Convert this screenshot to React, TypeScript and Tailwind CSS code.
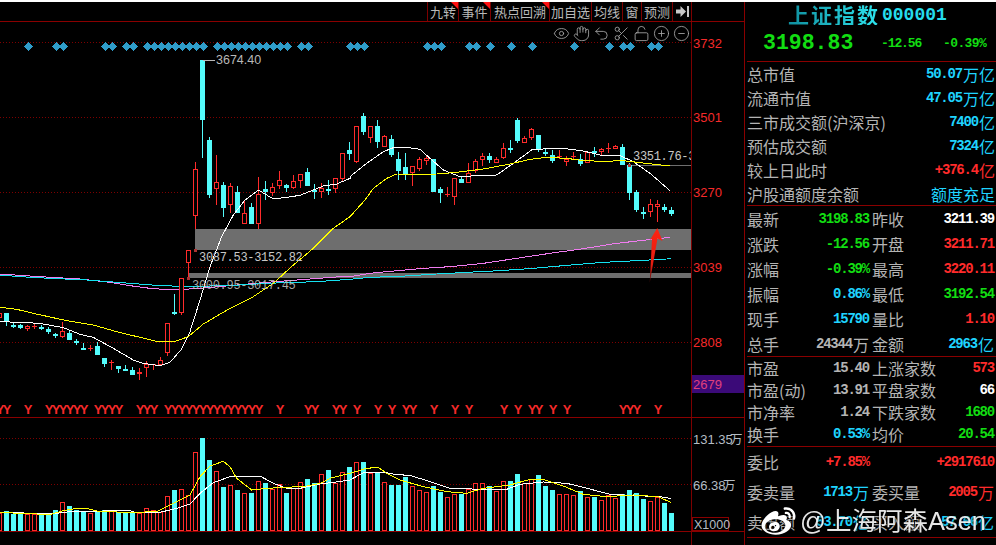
import { CircleMinus, CirclePlus, Eye, Hand, LockOpen, Scissors, Undo2 } from "lucide-react";
import { FaWeibo } from "react-icons/fa";

const mono = "font-['Liberation_Mono',monospace]";
const cjk = "font-['Noto_Sans_CJK_SC','Noto_Sans',sans-serif]";

const RED = "#ff2b2b";
const CYAN = "#54fcfc";
const GRID = "#7d0000";

// [colour, high, bodyTop, bodyBottom, low] in page pixels, one entry per 7px slot starting at k=-1
type Candle = [string, number, number, number, number];
const candles: Candle[] = [
  ["r", 313, 313, 318, 318],
  ["c", 313, 313, 321, 326],
  ["c", 322.7, 324.7, 325.7, 328],
  ["c", 324, 324.7, 328, 329],
  ["r", 325, 326, 328.7, 330.7],
  ["r", 323.7, 326, 326, 329],
  ["c", 325, 327.3, 327.3, 329.7],
  ["c", 327, 329, 332.3, 334],
  ["c", 332.7, 334.3, 335.7, 338.3],
  ["r", 322.3, 330.7, 337, 338],
  ["c", 331, 333, 339.7, 339.7],
  ["c", 339, 341, 343, 345],
  ["c", 343, 348, 348, 350],
  ["r", 345, 347.7, 347.7, 351],
  ["c", 342, 346, 355, 355],
  ["c", 358, 358, 363.7, 366.7],
  ["r", 360, 362, 362, 370],
  ["c", 366, 366, 369, 372.7],
  ["c", 365, 369.3, 370.7, 370.7],
  ["c", 367.3, 370, 375, 375],
  ["r", 368.3, 371.7, 374, 380],
  ["r", 361.3, 363.7, 368.3, 376.7],
  ["r", 364, 364, 364, 370],
  ["r", 357.3, 360.3, 365.3, 365.3],
  ["r", 323.3, 323.3, 352.7, 356],
  ["c", 294, 311.7, 311.7, 315],
  ["r", 278.3, 278.3, 312.7, 314.7],
  ["r", 250.3, 250.3, 262.7, 278],
  ["r", 162.3, 169.3, 215.7, 228.7],
  ["c", 60, 60, 119.7, 157.7],
  ["c", 137, 140, 195, 198],
  ["r", 155, 181.7, 188.7, 205],
  ["c", 182, 185, 208.3, 217.3],
  ["r", 183, 186.3, 205, 212.7],
  ["c", 186, 192, 212.7, 212.7],
  ["r", 200, 213.3, 224, 224],
  ["c", 203, 206.7, 224, 224],
  ["r", 177.3, 194.3, 224.3, 229.3],
  ["c", 181, 189.3, 192, 200],
  ["r", 183, 186.7, 193, 196],
  ["r", 171, 180.3, 186, 189],
  ["c", 184, 185.3, 188, 192],
  ["r", 175, 181.3, 188, 189],
  ["r", 174.3, 174.3, 180.7, 188],
  ["c", 168, 172, 185.7, 185.7],
  ["c", 184, 190, 190, 199],
  ["r", 183, 188.3, 192, 198],
  ["c", 180, 189, 189, 195],
  ["r", 178.3, 178.3, 189, 193],
  ["r", 153.3, 153.3, 179, 181],
  ["c", 142, 150, 154, 160],
  ["r", 126, 126, 161.7, 163],
  ["c", 113, 116, 132, 135],
  ["r", 126, 126, 137.7, 143],
  ["c", 120, 126, 141.7, 148],
  ["r", 135, 136, 146.7, 146.7],
  ["c", 135, 139, 155, 157],
  ["c", 152, 159, 170.7, 180],
  ["c", 153, 167, 174, 180],
  ["r", 166, 166, 172.7, 186],
  ["r", 157, 159, 169, 171],
  ["r", 156, 158, 161.3, 165],
  ["c", 159, 159, 191.7, 191.7],
  ["c", 187, 189, 192.7, 203],
  ["r", 186.7, 194, 194, 197],
  ["r", 178.3, 178.3, 196.7, 205],
  ["c", 175.7, 179, 183, 183],
  ["r", 163.3, 173.3, 182.7, 182.7],
  ["r", 158.7, 161, 171, 173.3],
  ["r", 153.3, 156, 160, 165.7],
  ["c", 153.3, 156, 160, 163.3],
  ["r", 156.7, 159.3, 163.3, 163.3],
  ["r", 143.3, 148.3, 157.7, 159.3],
  ["c", 140, 148.3, 148.3, 152.7],
  ["c", 118, 120, 140.7, 142.7],
  ["r", 136, 138.3, 143.3, 143.3],
  ["r", 128.3, 129.3, 137.7, 140],
  ["c", 135, 135, 150, 151.7],
  ["c", 149, 152.3, 152.3, 156],
  ["c", 150, 155, 160.7, 162.7],
  ["r", 150, 155.7, 157.3, 159.3],
  ["r", 156, 159.3, 162.3, 165.7],
  ["r", 152, 156, 156, 159],
  ["c", 154, 159.3, 164.3, 165.7],
  ["r", 151.7, 152, 163.3, 163.3],
  ["c", 146.7, 150.7, 150.7, 156.7],
  ["r", 147.7, 149.3, 152, 155.7],
  ["r", 143.3, 148.3, 148.3, 152.7],
  ["r", 145, 146, 149.3, 149.3],
  ["c", 144, 147, 165, 165],
  ["c", 163.3, 165, 192.7, 200],
  ["c", 190, 192, 210, 212],
  ["c", 206.7, 211.7, 211.7, 219],
  ["r", 199, 204.3, 212.3, 216.7],
  ["r", 200, 204.3, 207.3, 221.7],
  ["c", 204, 206.7, 210, 212.3],
  ["c", 207.3, 210, 214, 215.7],
];

// [colour, bar top in zoomed units] for the same slots
const volumes: [string, number][] = [
  ["r", 340], ["c", 334], ["c", 342], ["c", 340], ["r", 343], ["r", 343], ["c", 345], ["c", 345], ["c", 330], ["r", 307],
  ["c", 318], ["c", 330], ["c", 335], ["r", 340], ["c", 333], ["c", 330], ["r", 333], ["c", 335], ["c", 337], ["c", 335],
  ["r", 338], ["r", 325], ["r", 331], ["r", 336], ["r", 289], ["c", 270], ["r", 268], ["r", 285], ["r", 157], ["c", 114],
  ["c", 180], ["r", 214], ["c", 261], ["r", 256], ["c", 270], ["r", 280], ["c", 279], ["r", 244], ["c", 249], ["r", 266],
  ["r", 253], ["c", 279], ["r", 264], ["r", 247], ["c", 237], ["c", 249], ["r", 223], ["c", 210], ["r", 250], ["r", 217],
  ["c", 201], ["r", 186], ["c", 186], ["r", 218], ["c", 218], ["r", 246], ["c", 255], ["c", 255], ["c", 231], ["r", 259],
  ["r", 270], ["r", 277], ["c", 257], ["c", 275], ["r", 291], ["r", 282], ["c", 282], ["r", 268], ["r", 250], ["r", 250],
  ["c", 258], ["r", 273], ["r", 244], ["c", 243], ["c", 222], ["r", 250], ["r", 238], ["c", 225], ["c", 258], ["c", 270],
  ["r", 282], ["r", 282], ["r", 285], ["c", 273], ["r", 291], ["c", 291], ["r", 300], ["r", 285], ["r", 294], ["c", 283],
  ["c", 270], ["c", 280], ["c", 297], ["r", 304], ["r", 291], ["c", 309], ["c", 339],
];

const diamondSlots = [
  3, 7, 8, 14, 15, 17, 18, 20, 21, 22, 23, 24, 25, 26, 27, 28, 30, 31, 32, 33, 34, 35, 36, 37, 38, 39, 40, 42, 43, 49, 50,
  51, 60, 61, 62, 66, 67, 69, 72, 75, 81, 86, 88, 89, 92, 93,
];
const ySlots = [
  -1, 0, 3, 6, 7, 8, 9, 10, 11, 13, 14, 15, 16, 19, 20, 21, 23, 24, 25, 26, 27, 28, 29, 30, 31, 32, 33, 34, 35, 36, 39, 43,
  44, 47, 48, 50, 53, 55, 57, 58, 61, 64, 66, 71, 73, 75, 76, 78, 80, 88, 89, 90, 93,
];

const slotX = (k: number) => 7 * k + 6.5;

// converts [x, y] pairs measured in a 3x crop back to page pixels
const crop = (ox: number, oy: number, pts: number[][]) =>
  pts.map(([x, y]) => `${ox + x / 3},${oy + y / 3}`).join(" ");

const whiteMain = [
  crop(0, 200, [[0, 365], [90, 368], [130, 372], [190, 383], [240, 403], [280, 412], [340, 445], [400, 480], [430, 490], [480, 497], [510, 487], [545, 447], [570, 395], [600, 300], [630, 200], [665, 110], [700, 45], [735, 0]]),
  crop(0, 0, [[740, 597], [775, 570], [820, 597], [860, 592], [900, 586], [940, 570], [970, 558], [1010, 552], [1050, 535]]),
  crop(350, 0, [[0, 530], [50, 490], [100, 455], [130, 443], [175, 443], [210, 448], [240, 475], [280, 510], [330, 530], [380, 527], [440, 525], [490, 490], [545, 450], [580, 447], [640, 445], [700, 453], [750, 465], [810, 467], [850, 485], [900, 520], [960, 572]]),
].join(" ");
const yellowMain = [
  crop(0, 200, [[0, 322], [50, 328], [100, 340], [200, 362], [280, 375], [350, 395], [420, 412], [470, 424], [525, 424], [565, 410], [610, 372], [690, 325], [760, 290], [820, 250], [880, 195], [940, 145], [1000, 85], [1050, 50]]),
  crop(350, 0, [[45, 600], [70, 565], [110, 535], [140, 522], [200, 523], [260, 522], [320, 517], [400, 507], [480, 492], [540, 478], [590, 472], [650, 475], [700, 482], [760, 484], [820, 482], [870, 488], [960, 498]]),
].join(" ");
const magentaMain = [
  crop(0, 200, [[0, 222], [60, 226], [120, 230], [240, 237], [330, 247], [390, 257], [450, 265], [520, 270], [600, 265], [700, 256], [800, 247], [890, 240], [1020, 230], [1050, 230]]),
  crop(350, 200, [[60, 220], [120, 214], [220, 205], [300, 200], [400, 190], [500, 175], [600, 160], [700, 146], [800, 130], [880, 121], [960, 112]]),
].join(" ");
const cyanMain = [
  crop(0, 200, [[0, 225], [60, 230], [150, 235], [260, 240], [390, 250], [470, 256], [560, 260], [700, 256], [800, 250], [950, 245], [1050, 238]]),
  crop(350, 200, [[60, 232], [150, 229], [260, 222], [350, 217], [450, 212], [550, 205], [640, 197], [760, 187], [880, 181], [950, 177], [964, 175]]),
].join(" ");
const whiteVol = [
  crop(0, 400, [[0, 337], [70, 338], [72, 341], [160, 341], [210, 335], [300, 334], [330, 331], [385, 331], [410, 338], [480, 337], [530, 325], [570, 312], [600, 280], [640, 248], [690, 230], [765, 229], [780, 228], [820, 250], [860, 265], [900, 265], [960, 252], [1000, 247], [1050, 240]]),
  crop(350, 400, [[40, 218], [110, 218], [140, 224], [180, 226], [240, 245], [300, 265], [400, 268], [470, 268], [510, 253], [580, 246], [650, 250], [700, 262], [780, 283], [860, 287], [930, 290], [964, 296]]),
].join(" ");
const yellowVol = [
  crop(0, 400, [[0, 337], [60, 340], [110, 342], [155, 342], [190, 332], [230, 325], [260, 325], [300, 335], [400, 337], [470, 335], [530, 305], [570, 285], [600, 230], [630, 198], [670, 184], [690, 200], [710, 235], [755, 270], [800, 265], [860, 262], [920, 258], [960, 250], [990, 235], [1050, 220]]),
  crop(350, 400, [[50, 205], [85, 202], [110, 220], [150, 240], [220, 260], [290, 275], [350, 280], [400, 265], [480, 255], [540, 238], [580, 238], [640, 258], [700, 283], [770, 290], [850, 285], [925, 290], [964, 308]]),
].join(" ");

function CandleMark({ c, k }: { c: Candle; k: number }) {
  const [col, hi, top, bot, lo] = c;
  const x = slotX(k);
  const stroke = col === "r" ? RED : CYAN;
  const t = Math.round(top);
  const b = Math.round(bot);
  return (
    <g>
      <line x1={x} x2={x} y1={hi} y2={t} stroke={stroke} />
      <line x1={x} x2={x} y1={b} y2={lo} stroke={stroke} />
      {b - t < 2 ? (
        <rect x={x - 2.5} y={t} width={5} height={col === "r" ? 1 : Math.max(b - t, 1) + 1} fill={stroke} />
      ) : col === "r" ? (
        <rect x={x - 2} y={t + 0.5} width={4} height={b - t - 1} fill="#000" stroke={stroke} />
      ) : (
        <rect x={x - 2.5} y={t} width={5} height={b - t} fill={stroke} />
      )}
    </g>
  );
}

function MainChart() {
  return (
    <svg width={744} height={396} viewBox="0 22 744 396" className="block" shapeRendering="crispEdges">
      {[42.5, 117.5, 192.5, 267.5, 342.5].map((y) => (
        <line key={y} x1={0} x2={691} y1={y} y2={y} stroke={GRID} strokeDasharray="1 2" />
      ))}
      <rect x={195} y={229} width={496} height={21} fill="#6e6e6e" />
      <rect x={188} y={273} width={503} height={5} fill="#6e6e6e" />
      <line x1={630} x2={691} y1={165.5} y2={165.5} stroke="#6e6e6e" />

      {diamondSlots.map((k) => (
        <polygon
          key={k}
          points={`${7 * k + 7.5},42 ${7 * k + 12},46.5 ${7 * k + 7.5},51 ${7 * k + 3},46.5`}
          fill="#2f9cc9"
        />
      ))}

      <polyline points={magentaMain} fill="none" stroke="#f07cf0" />
      <polyline points={cyanMain} fill="none" stroke="#14e0ef" />

      {candles.map((c, i) => (
        <CandleMark key={i} c={c} k={i - 1} />
      ))}

      <polyline points={whiteMain} fill="none" stroke="#fff" />
      <polyline points={yellowMain} fill="none" stroke="#ffff00" />

      <rect x={194} y={249} width={3} height={3} fill="#a33" />
      <rect x={187} y={277} width={3} height={3} fill="#a33" />
      <rect x={628} y={164} width={3} height={3} fill="#a33" />

      <g fontFamily="'Liberation Mono', monospace" fontSize={12} letterSpacing={-0.3} fill="#c8c8c8">
        <text x={199} y={261}>3087.53-3152.82</text>
        <text x={192} y={289} fillOpacity={0.85}>3000.95-3017.45</text>
        <svg x={0} y={0} width={691} height={417} overflow="hidden">
          <text x={633} y={160}>3351.76-3</text>
        </svg>
      </g>
      <text x={216} y={64} fontFamily="'Liberation Sans', sans-serif" fontSize={12.5} fill="#b8b8b8">3674.40</text>
      <line x1={203} x2={215} y1={60.5} y2={60.5} stroke="#b8b8b8" />

      <g fontFamily="'Liberation Sans', sans-serif" fontSize={13} fontWeight={700} fill="#f52a2a" textAnchor="middle">
        {ySlots.map((k) => (
          <text key={k} x={slotX(k) + 0.5} y={413.5}>Y</text>
        ))}
      </g>

      <defs>
        <linearGradient id="arrowFade" x1="0" y1="0" x2="0" y2="1">
          <stop offset="0" stopColor="#ff2412" />
          <stop offset="0.7" stopColor="#e01c10" />
          <stop offset="1" stopColor="#4a0808" />
        </linearGradient>
      </defs>
      <polygon
        points="657.3,228 662.5,241 657.5,238.5 649.7,283 652,239 650,240"
        fill="url(#arrowFade)"
        shapeRendering="auto"
      />

      <rect x={692} y={375} width={52} height={18} fill="#3b0a78" />
      <g fontFamily="'Liberation Sans', sans-serif" fontSize={13} fill="#f52a2a">
        <text x={693} y={48}>3732</text>
        <text x={693} y={122}>3501</text>
        <text x={693} y={197}>3270</text>
        <text x={693} y={272}>3039</text>
        <text x={693} y={347}>2808</text>
      </g>
      <text x={693} y={388.5} fontFamily="'Liberation Sans', sans-serif" fontSize={13} fill="#e0407c">2679</text>
      <line x1={691.5} x2={691.5} y1={22} y2={418} stroke={GRID} />
      <line x1={0} x2={744} y1={417.5} y2={417.5} stroke="#8a0000" />
    </svg>
  );
}

function VolumeChart() {
  return (
    <svg width={744} height={127} viewBox="0 418 744 127" className="block" shapeRendering="crispEdges">
      {[438.5, 484.5].map((y) => (
        <line key={y} x1={0} x2={691} y1={y} y2={y} stroke={GRID} strokeDasharray="1 2" />
      ))}
      {volumes.map(([col, top], i) => {
        const x = slotX(i - 1);
        const y = Math.round(400 + top / 3);
        return col === "r" ? (
          <rect key={i} x={x - 2} y={y + 0.5} width={4} height={531 - y - 1} fill="#000" stroke={RED} />
        ) : (
          <rect key={i} x={x - 2.5} y={y} width={5} height={531 - y} fill={CYAN} />
        );
      })}
      <polyline points={whiteVol} fill="none" stroke="#fff" />
      <polyline points={yellowVol} fill="none" stroke="#ffff00" />
      <line x1={0} x2={744} y1={531.5} y2={531.5} stroke="#8a0000" />
      <line x1={691.5} x2={691.5} y1={418} y2={545} stroke={GRID} />
      <rect x={692.5} y={517.5} width={36} height={13} fill="#000" stroke="#8a0000" />
      <g fontFamily="'Liberation Sans', sans-serif" fontSize={13} fill="#b4bcc4">
        <text x={693} y={444}>131.35</text>
        <text x={693} y={490}>66.38</text>
        <text x={694} y={528.5} fontSize={12.5}>X1000</text>
      </g>
      <g fontFamily="'Noto Sans CJK SC', sans-serif" fontSize={12.5} fill="#b4bcc4">
        <text x={730} y={444}>万</text>
        <text x={723} y={490}>万</text>
      </g>
    </svg>
  );
}

type ToolItem = { label: string; w: string; flag?: boolean };
const tools: ToolItem[] = [
  { label: "九转", w: "w-[31px]", flag: true },
  { label: "事件", w: "w-[32px]", flag: true },
  { label: "热点回溯", w: "w-[59px]", flag: true },
  { label: "加自选", w: "w-[42px]" },
  { label: "均线", w: "w-[31px]" },
  { label: "窗", w: "w-[19px]" },
  { label: "预测", w: "w-[31px]" },
];

function Toolbar() {
  return (
    <div className={`flex h-[20px] justify-end border-b border-[#8a0000] pr-[52px] ${cjk}`}>
      {tools.map((t) => (
        <div
          key={t.label}
          className={`relative flex items-center justify-center border-l border-[#7d0000] text-[13px] leading-none text-[#b9b9b9] ${t.w}`}
        >
          {t.label}
          {t.flag && (
            <span className="absolute top-0 right-0 h-0 w-0 border-t-[7px] border-l-[7px] border-t-[#ff1010] border-l-transparent" />
          )}
        </div>
      ))}
      <div className="flex w-[20px] items-center justify-center border-x border-[#7d0000]">
        <svg width={13} height={11} viewBox="0 0 13 11">
          <path d="M0 3.5h4.5V0L10 5.5 4.5 11V7.5H0z" fill="#c8c8c8" />
          <rect x={11} y={0} width={2} height={11} fill="#c8c8c8" />
        </svg>
      </div>
    </div>
  );
}

function ChartTools() {
  const cls = "h-[17px] w-[17px] text-[#a8a8a8]";
  return (
    <div className="absolute top-[3px] right-[54px] flex gap-[3px]">
      <Eye className={cls} strokeWidth={1.2} />
      <Hand className={cls} strokeWidth={1.2} />
      <Undo2 className={cls} strokeWidth={1.2} />
      <Scissors className={cls} strokeWidth={1.2} />
      <LockOpen className={cls} strokeWidth={1.2} />
      <CirclePlus className={cls} strokeWidth={1.2} />
      <CircleMinus className={cls} strokeWidth={1.2} />
    </div>
  );
}

const colors: Record<string, string> = {
  c: "text-[#1fd4ff]",
  r: "text-[#ff2b2b]",
  g: "text-[#12dd12]",
  w: "text-white",
  s: "text-[#b4b4b4]",
};

function Value({ v, unit, c }: { v: string; unit?: string; c: string }) {
  return (
    <span className={`flex items-center whitespace-nowrap ${colors[c]}`}>
      <span className={`text-[14px] font-bold tracking-[-1.2px] ${mono}`}>{v}</span>
      {unit && <span className={`ml-[1px] text-[16px] leading-none ${cjk}`}>{unit}</span>}
    </span>
  );
}

const totals: [string, string, string, string][] = [
  ["总市值", "50.07", "万亿", "c"],
  ["流通市值", "47.05", "万亿", "c"],
  ["三市成交额(沪深京)", "7400", "亿", "c"],
  ["预估成交额", "7324", "亿", "c"],
  ["较上日此时", "+376.4", "亿", "r"],
];

type Cell = [string, string, string, string?];
// label, value, colour, optional unit for both columns of the quote grid
const quotes: [Cell, Cell][] = [
  [["最新", "3198.83", "g"], ["昨收", "3211.39", "w"]],
  [["涨跌", "-12.56", "g"], ["开盘", "3211.71", "r"]],
  [["涨幅", "-0.39%", "g"], ["最高", "3220.11", "r"]],
  [["振幅", "0.86%", "c"], ["最低", "3192.54", "g"]],
  [["现手", "15790", "c"], ["量比", "1.10", "r"]],
  [["总手", "24344", "s", "万"], ["金额", "2963", "c", "亿"]],
];
const ratios: [Cell, Cell][] = [
  [["市盈", "15.40", "s"], ["上涨家数", "573", "r"]],
  [["市盈(动)", "13.91", "s"], ["平盘家数", "66", "w"]],
  [["市净率", "1.24", "s"], ["下跌家数", "1680", "g"]],
  [["换手", "0.53%", "c"], ["均价", "20.54", "g"]],
];
const orders: [Cell, Cell][] = [
  [["委比", "+7.85%", "r"], ["", "+2917610", "r"]],
  [["委卖量", "1713", "c", "万"], ["委买量", "2005", "r", "万"]],
  [["卖出额", "53.70", "c", "亿"], ["买入额", "57.66", "c", "亿"]],
];

function PairRow({ row, h }: { row: [Cell, Cell]; h: string }) {
  const [a, b] = row;
  return (
    <div className={`grid grid-cols-[125px_122px] items-center text-[16px] leading-none text-[#b4b4b4] ${h} ${cjk}`}>
      <div className="flex items-center justify-between pr-[3px]">
        <span className="whitespace-nowrap">{a[0]}</span>
        <Value v={a[1]} c={a[2]} unit={a[3]} />
      </div>
      <div className="flex items-center justify-between">
        <span className="whitespace-nowrap">{b[0]}</span>
        <Value v={b[1]} c={b[2]} unit={b[3]} />
      </div>
    </div>
  );
}

function Sidebar() {
  return (
    <aside className="relative w-[252px] border-l border-[#8a0000] pl-[2px]">
      <div className="h-[60px] border-b border-[#8a0000]">
        <div className="flex h-[25px] items-center pl-[41px] font-bold">
          <span className={`bg-gradient-to-r from-[#0f8f9f] to-[#2ee6f0] bg-clip-text text-[21px] leading-none tracking-[2px] text-transparent ${cjk}`}>
            上证指数
          </span>
          <span className={`ml-[2px] text-[18px] leading-none text-[#25dcec] ${mono}`}>000001</span>
        </div>
        <div className={`flex h-[33px] items-center font-bold text-[#12dd12] ${mono}`}>
          <span className="ml-[16px] w-[118px] text-[21.5px] leading-none">3198.83</span>
          <span className="w-[62px] text-[13px] leading-none tracking-[-1.1px]">-12.56</span>
          <span className="text-[13px] leading-none tracking-[-0.6px]">-0.39%</span>
        </div>
      </div>

      <div className="h-[144px] border-b border-[#8a0000] pr-[1px]">
        {totals.map(([l, v, u, c]) => (
          <div key={l} className={`flex h-[24px] items-center justify-between text-[16px] leading-none text-[#b4b4b4] ${cjk}`}>
            <span className="whitespace-nowrap">{l}</span>
            <Value v={v} unit={u} c={c} />
          </div>
        ))}
        <div className={`flex h-[23px] items-center justify-between text-[16px] leading-none ${cjk}`}>
          <span className="whitespace-nowrap text-[#b4b4b4]">沪股通额度余额</span>
          <span className="text-[#1fd4ff]">额度充足</span>
        </div>
      </div>

      <div className="h-[151px] border-b border-[#8a0000]">
        {quotes.map((r) => (
          <PairRow key={r[0][0]} row={r} h="h-[25px]" />
        ))}
      </div>
      <div className="h-[90px] border-b border-[#8a0000]">
        {ratios.map((r) => (
          <PairRow key={r[0][0]} row={r} h="h-[22px]" />
        ))}
      </div>
      <div className="h-[91px] border-b border-[#8a0000]">
        {orders.map((r) => (
          <PairRow key={r[0][0]} row={r} h="h-[30px]" />
        ))}
      </div>
    </aside>
  );
}

export default function App() {
  return (
    <div className="relative h-[545px] w-[996px] overflow-hidden bg-black">
      <div className="h-[2px] bg-white" />
      <div className="flex h-[543px]">
        <div className="w-[744px]">
          <Toolbar />
          <div className="relative">
            <ChartTools />
            <MainChart />
            <VolumeChart />
          </div>
        </div>
        <Sidebar />
      </div>
      {/* weibo watermark sits over the bottom of the quote panel */}
      <div className="absolute top-[505px] left-[760px] flex items-center gap-[3px] font-['Liberation_Sans','Noto_Sans_CJK_SC',sans-serif] text-white drop-shadow-[0_0_1px_#000]">
        <FaWeibo className="h-[34px] w-[37px]" />
        <span className="text-[25.5px] leading-none whitespace-nowrap opacity-90">@上海阿森Asen</span>
      </div>
    </div>
  );
}
